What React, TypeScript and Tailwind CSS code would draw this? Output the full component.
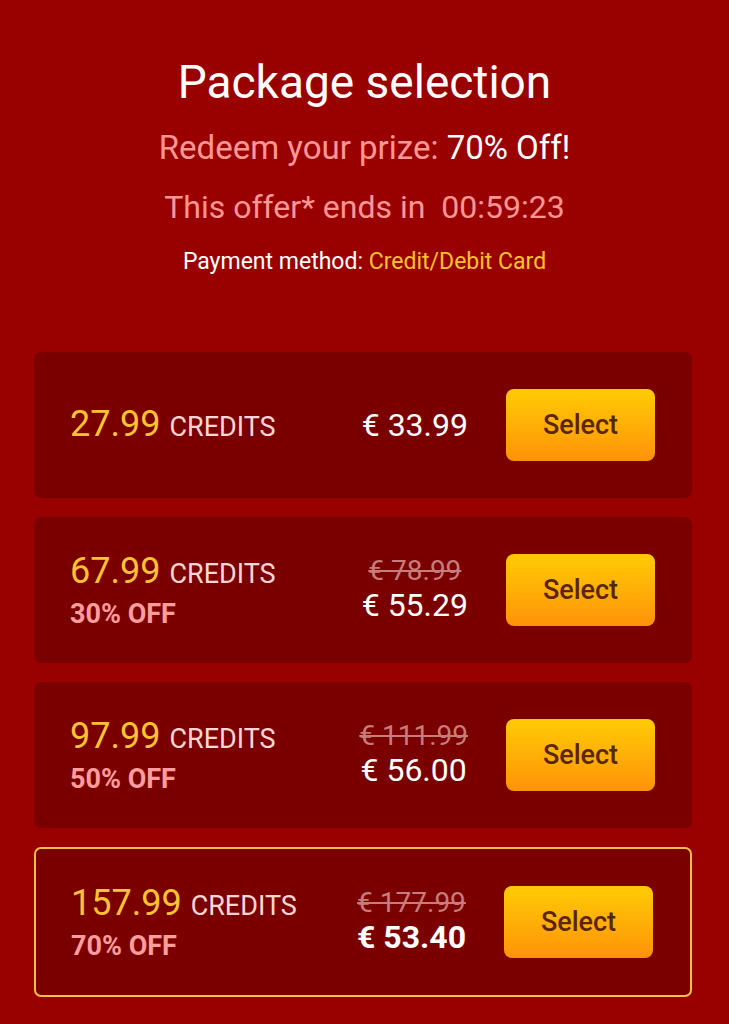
import React from "react";

type Pack = {
  credits: string;
  off?: string;
  old?: string;
  price: string;
  selected?: boolean;
};

const packs: Pack[] = [
  { credits: "27.99", price: "€ 33.99" },
  { credits: "67.99", off: "30% OFF", old: "€ 78.99", price: "€ 55.29" },
  { credits: "97.99", off: "50% OFF", old: "€ 111.99", price: "€ 56.00" },
  { credits: "157.99", off: "70% OFF", old: "€ 177.99", price: "€ 53.40", selected: true },
];

function Card({ p }: { p: Pack }) {
  return (
    <div
      className={
        p.selected
          ? "flex h-[150px] items-center rounded-[7px] border-2 border-[#ffbd4a] bg-[#7a0000] pl-[35px] pr-[37px]"
          : "flex h-[146px] items-center rounded-[7px] bg-[#7a0000] pl-[36px] pr-[37px]"
      }
    >
      <div className="flex flex-1 flex-col">
        <div className="flex items-baseline leading-[40px]">
          <span className="text-[36px] text-[#ffc233]">{p.credits}</span>
          <span className="ml-[9px] text-[27px] text-[#ffd6d6]">CREDITS</span>
        </div>
        {p.off && (
          <div className="mt-1 text-[27px] font-bold leading-[32px] text-[#ff9c9c]">{p.off}</div>
        )}
      </div>
      <div className="flex flex-col items-center">
        {p.old && (
          <div className="text-[28px] leading-[30px] text-[#c97c7c] line-through decoration-[#c97c7c] decoration-2">
            {p.old}
          </div>
        )}
        <div
          className={
            p.selected
              ? "text-[32px] font-bold leading-[38px] text-white"
              : "text-[32px] leading-[38px] text-white"
          }
        >
          {p.price}
        </div>
      </div>
      <button className="ml-[38px] flex h-[72px] w-[149px] items-center justify-center rounded-[8px] bg-gradient-to-b from-[#ffcb05] to-[#ff9208] text-[27px] font-medium text-[#5a2600]">
        Select
      </button>
    </div>
  );
}

export default function App() {
  return (
    <div
      className="min-h-[1024px] w-full bg-[#990000] pb-6"
      style={{ fontFamily: "Roboto, 'Liberation Sans', sans-serif" }}
    >
      <div className="flex flex-col items-center pt-[55px] text-center">
        <h1 className="text-[46px] leading-[54px] text-white">Package selection</h1>
        <p className="mt-[19px] text-[33px] leading-[40px] text-[#ff9696]">
          Redeem your prize: <span className="text-white">70% Off!</span>
        </p>
        <p className="mt-[19px] whitespace-pre text-[32px] leading-[40px] text-[#ff9696]">
          {"This offer* ends in  00:59:23"}
        </p>
        <p className="mt-[20px] text-[23px] leading-[30px] text-white">
          Payment method: <span className="text-[#ffc22c]">Credit/Debit Card</span>
        </p>
      </div>
      <div className="mt-[75px] flex flex-col gap-[19px] pl-[34px] pr-[37px]">
        {packs.map((p) => (
          <Card key={p.credits} p={p} />
        ))}
      </div>
    </div>
  );
}
